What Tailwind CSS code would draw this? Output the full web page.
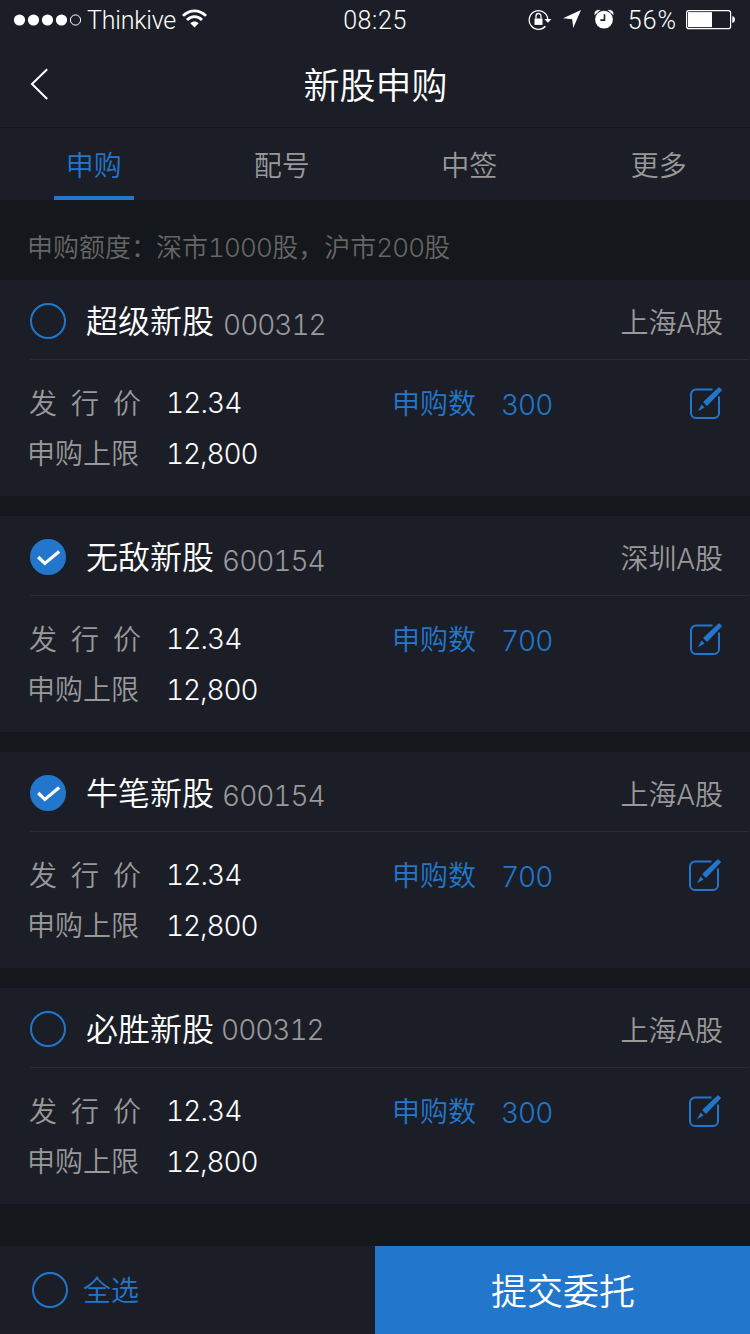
<!DOCTYPE html>
<html lang="zh-CN">

<head>
    <meta charset="UTF-8">
    <meta name="viewport" content="width=device-width, initial-scale=1.0">
    <title>新股申购</title>
    <script src="https://cdn.jsdelivr.net/npm/@tailwindcss/browser@4"></script>
</head>

<body class="bg-[#14171b] w-[750px] h-[1334px] flex flex-col overflow-hidden text-white font-[350] tabular-nums font-['Inter','Noto_Sans_CJK_SC',sans-serif]">

    <!-- Status bar -->
    <div class="h-10 shrink-0 bg-[#1b1e26] grid grid-cols-3 items-center font-['Roboto',sans-serif] font-light text-[25px] leading-[38px]">
        <div class="flex items-center pl-[13px]">
            <svg class="w-[69px] h-3 shrink-0" viewBox="0 0 69 12" fill="#fff">
                <circle cx="6.5" cy="6" r="5.6" />
                <circle cx="20.5" cy="6" r="5.6" />
                <circle cx="34.5" cy="6" r="5.6" />
                <circle cx="48.5" cy="6" r="5.6" />
                <circle cx="62.5" cy="6" r="5.1" fill="none" stroke="#fff" />
            </svg>
            <span class="ml-[5px] mt-px w-[90px] tracking-[-0.2px]">Thinkive</span>
            <svg class="ml-[5px] mb-[3px] w-[25px] h-[19px]" viewBox="0 0 25 19" fill="none" stroke="#fff">
                <path d="M1 6.9C7.5.1 17.5.1 24 6.9" stroke-width="2.8" />
                <path d="M5 11c4.3-4.4 10.7-4.4 15 0" stroke-width="2.8" />
                <path d="M12.5 18.6 8.3 14.3c2.3-2.3 6.1-2.3 8.4 0z" fill="#fff" stroke="none" />
            </svg>
        </div>
        <div class="mt-px text-center tracking-[0.6px]">08:25</div>
        <div class="flex items-center justify-end pr-[14px]">
            <svg class="w-6 h-[22px]" viewBox="0 0 24 22">
                <path d="M17.4 17.3A9.3 9.3 0 1 1 19.8 10.4" fill="none" stroke="#fff" stroke-width="1.3" />
                <path d="M16.4 10h7L19.9 13.8z" fill="#fff" />
                <path d="M6.5 9.5h8v6.4h-8z" fill="#fff" />
                <path d="M8 9.5V7a2.5 2.5 0 0 1 5 0v2.5" fill="none" stroke="#fff" stroke-width="1.3" />
            </svg>
            <svg class="ml-[11px] mb-[2px] w-[18px] h-[18px]" viewBox="0 0 18 18" fill="#fff">
                <path d="M18 0 10.2 18 9.2 9.3 0 8.2z" />
            </svg>
            <svg class="ml-[13px] mb-[2px] w-5 h-5" viewBox="0 0 20 20">
                <circle cx="10" cy="10.6" r="8.9" fill="#fff" />
                <path d="M.4 6.4C-.4 2 2.4-.2 6.8 1zM19.6 6.4C20.4 2 17.6-.2 13.2 1z" fill="#fff" stroke="#1b1e26" stroke-width=".5" />
                <path d="M10.5 5.2v5.9H6.4" fill="none" stroke="#1b1e26" stroke-width="1.6" />
            </svg>
            <span class="ml-[14px] mt-px tracking-[1px]">56%</span>
            <svg class="ml-[9px] w-[50px] h-5" viewBox="0 0 50 20">
                <rect x=".6" y=".6" width="44" height="18" rx="2.2" fill="none" stroke="#fff" stroke-width="1.2" />
                <path d="M2 2.1h24v15H2z" fill="#fff" />
                <path d="M46.3 6.3c3.5 0 3.5 6.6 0 6.6z" fill="#fff" />
            </svg>
        </div>
    </div>

    <!-- Title bar -->
    <header class="h-22 shrink-0 bg-[#1b1e26] border-b border-[#14171b] grid grid-cols-3 items-center">
        <svg class="ml-[29px] w-5 h-8" viewBox="0 0 20 32" fill="none" stroke="#fff" stroke-width="2">
            <path d="M18.2 1.2 3 16l15.2 15" />
        </svg>
        <h1 class="pt-1 pl-px text-center text-4xl leading-[84px]">新股申购</h1>
    </header>

    <!-- Tabs -->
    <nav class="h-18 shrink-0 bg-[#1b1e26] grid grid-cols-4 text-[28px] leading-[76px] text-[#999] text-center">
        <a class="flex flex-col items-center text-[#2277cd]">
            <span class="h-[68px]">申购</span>
            <span class="w-20 h-1 bg-[#2277cd]"></span>
        </a>
        <a class="pl-px">配号</a>
        <a class="pl-px">中签</a>
        <a class="pl-[5px]">更多</a>
    </nav>

    <p class="h-20 shrink-0 pl-[27px] text-[26px] leading-[95px] text-[#666]">申购额度：<span class="-ml-px">深市<span class="tracking-[-0.8px]">1000</span>股，沪市<span class="tracking-[-0.8px]">200</span>股</span></p>

    <!-- Stock list -->
    <main id="stockList" class="grow flex flex-col gap-5"></main>

    <!-- Footer -->
    <footer class="h-22 shrink-0 grid grid-cols-2">
        <div class="bg-[#1b1e26] flex items-center pl-8 text-[28px] text-[#2277cd]">
            <span class="w-9 h-9 rounded-full border-2 border-[#2277cd]"></span>
            <span class="ml-[15px] mt-[2px]">全选</span>
        </div>
        <button class="bg-[#2277cd] pt-[3px] pl-px text-4xl">提交委托</button>
    </footer>

    <script>
        const stocks = [
            { name: '超级新股', code: '000312', codeClass: 'ml-[9px] mt-[11px]', market: '上海A股', count: 300, checked: false, iconClass: 'mr-7' },
            { name: '无敌新股', code: '600154', codeClass: 'ml-[8px] mt-[11px]', market: '深圳A股', count: 700, checked: true, iconClass: 'mr-7' },
            { name: '牛笔新股', code: '600154', codeClass: 'ml-[8px] mt-[9px]', market: '上海A股', count: 700, checked: true, iconClass: 'mr-[29px]' },
            { name: '必胜新股', code: '000312', codeClass: 'ml-[7px] mt-[5px]', market: '上海A股', count: 300, checked: false, iconClass: 'mr-[29px]' }
        ];

        const unchecked = '<span class="block w-9 h-9 rounded-full border-2 border-[#2277cd]"></span>';
        const checked = `
            <svg class="w-9 h-9" viewBox="0 0 36 36">
                <circle cx="18" cy="18" r="18" fill="#2277cd" />
                <path d="m8.2 18 6.6 6.4L29.2 12.4" fill="none" stroke="#fff" stroke-width="3.2" />
            </svg>`;

        document.getElementById('stockList').innerHTML = stocks.map(stock => `
            <section class="h-54 shrink-0 bg-[#1b1e26]">
                <div class="ml-[30px] mr-px h-20 border-b border-[#292c33] flex items-center">
                    <div class="w-9 h-9 mt-[3px] shrink-0">${stock.checked ? checked : unchecked}</div>
                    <h2 class="ml-5 text-[32px] leading-10 mt-[5px]">${stock.name}</h2>
                    <span class="${stock.codeClass} text-[28px] leading-10 tracking-[-1px] text-[#999]">${stock.code}</span>
                    <span class="ml-auto mr-[26px] mt-[6px] text-[28px] leading-10 tracking-[-0.1px] text-[#999]">${stock.market}</span>
                </div>
                <div class="pl-7 pt-[18px] flex items-start text-[28px] leading-[50px]">
                    <div class="w-[138px] mt-px text-[#999]">
                        <div class="pl-px tracking-[14px]">发行价</div>
                        <div class="-ml-px">申购上限</div>
                    </div>
                    <div class="w-[226px]">
                        <div class="tracking-[-0.9px]">12.34</div>
                        <div class="mt-px tracking-[-1.1px]">12,800</div>
                    </div>
                    <div class="w-[110px] mt-px text-[#2277cd]">申购数</div>
                    <div class="mt-[2px] -ml-px tracking-[-1px] text-[#2277cd]">${stock.count}</div>
                    <svg class="ml-auto mt-[9px] ${stock.iconClass} w-8 h-[33px]" viewBox="0 0 32 33">
                        <path d="M22.5 2.5H6a5 5 0 0 0-5 5V26a5 5 0 0 0 5 5h18a5 5 0 0 0 5-5V9.5" fill="none" stroke="#2277cd" stroke-width="2" />
                        <path d="M29 .9 31.2 3 17 18l-2.9-2.9z" fill="#2277cd" stroke="#2277cd" stroke-width="1.4" stroke-linejoin="round" />
                        <path d="M11.6 17.6 14.6 20.6 8 24.2z" fill="#2277cd" />
                    </svg>
                </div>
            </section>
        `).join('');
    </script>
</body>

</html>
